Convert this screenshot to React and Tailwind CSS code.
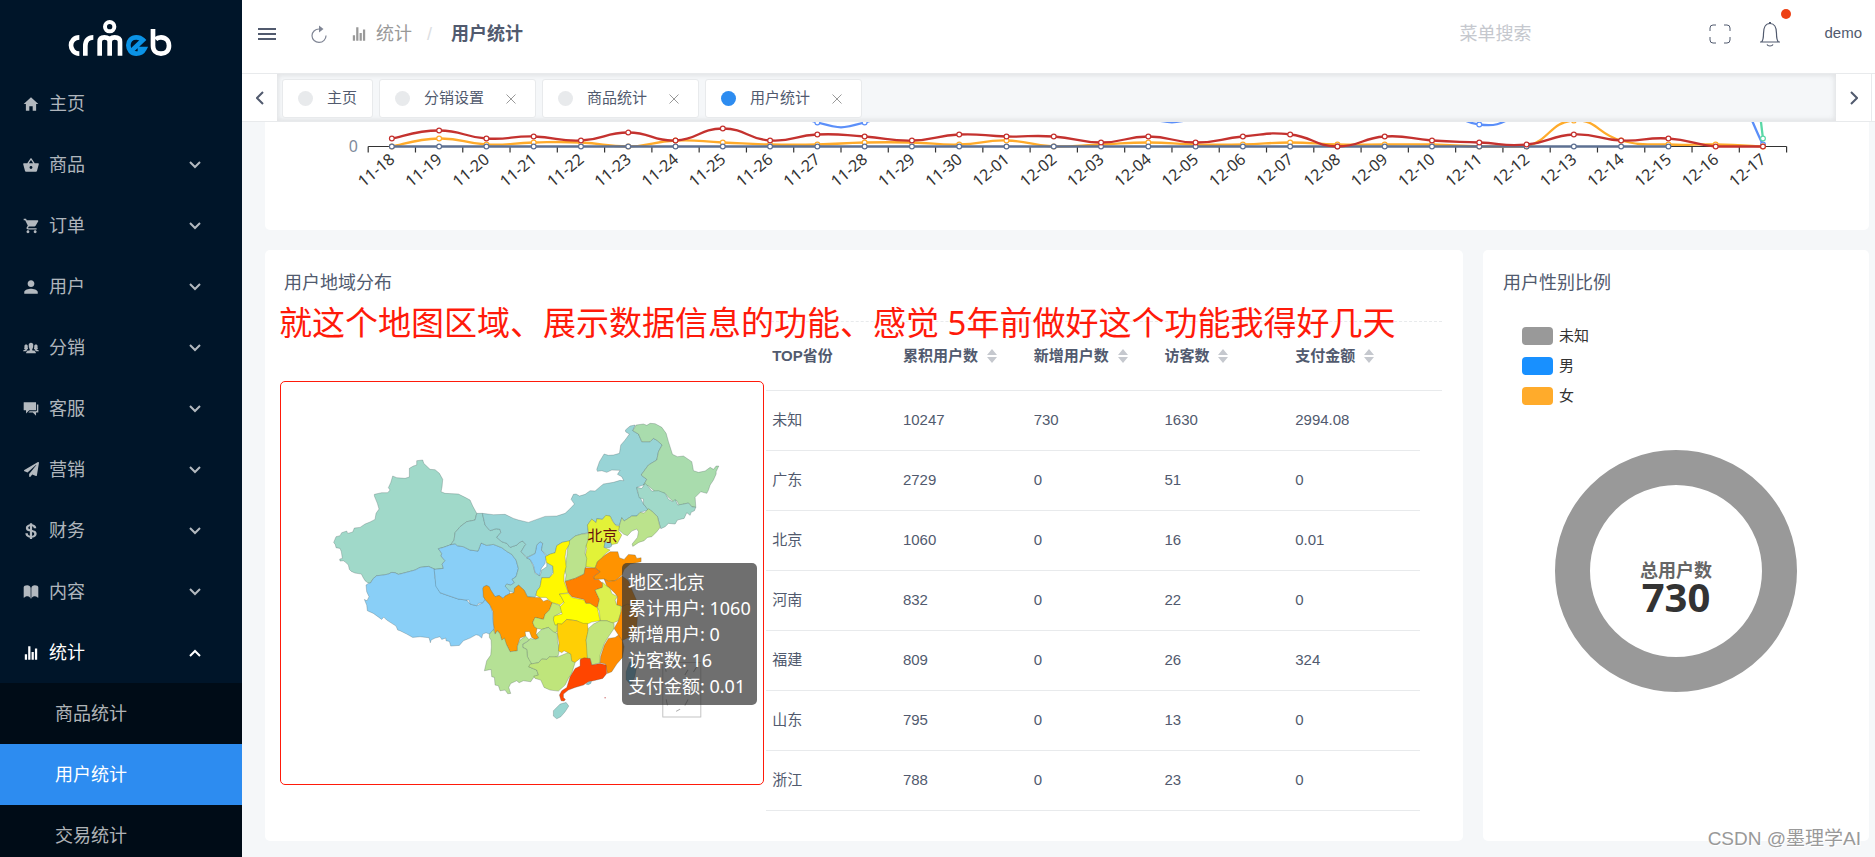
import { memo } from 'react'
import { FaPaperPlane } from 'react-icons/fa'
import {
  IoMdHome,
  IoMdBasket,
  IoMdCart,
  IoMdPerson,
  IoMdMenu,
  IoMdChatboxes,
  IoIosPeople,
  IoIosBook,
  IoIosStats,
  IoLogoUsd,
} from 'react-icons/io'

const MENU = [
  { label: '主页', icon: IoMdHome, leaf: true },
  { label: '商品', icon: IoMdBasket },
  { label: '订单', icon: IoMdCart },
  { label: '用户', icon: IoMdPerson },
  { label: '分销', icon: IoIosPeople },
  { label: '客服', icon: IoMdChatboxes },
  { label: '营销', icon: FaPaperPlane, small: true },
  { label: '财务', icon: IoLogoUsd },
  { label: '内容', icon: IoIosBook },
  { label: '统计', icon: IoIosStats, open: true },
]

const SUB_MENU = ['商品统计', '用户统计', '交易统计']

const TABS = [
  { label: '主页', fixed: true },
  { label: '分销设置' },
  { label: '商品统计' },
  { label: '用户统计', active: true },
]

const COLUMNS = ['TOP省份', '累积用户数', '新增用户数', '访客数', '支付金额']

const ROWS = [
  ['未知', '10247', '730', '1630', '2994.08'],
  ['广东', '2729', '0', '51', '0'],
  ['北京', '1060', '0', '16', '0.01'],
  ['河南', '832', '0', '22', '0'],
  ['福建', '809', '0', '26', '324'],
  ['山东', '795', '0', '13', '0'],
  ['浙江', '788', '0', '23', '0'],
]

const LEGEND = [
  { label: '未知', color: 'bg-[#999999]' },
  { label: '男', color: 'bg-[#1890ff]' },
  { label: '女', color: 'bg-[#ffab2b]' },
]

const DATES = [
  '11-18', '11-19', '11-20', '11-21', '11-22', '11-23', '11-24', '11-25', '11-26', '11-27',
  '11-28', '11-29', '11-30', '12-01', '12-02', '12-03', '12-04', '12-05', '12-06', '12-07',
  '12-08', '12-09', '12-10', '12-11', '12-12', '12-13', '12-14', '12-15', '12-16', '12-17',
]

const SERIES = [
  { color: '#5b8ff9', data: [60, 60, 50, 50, 50, 50, 50, 40, 25, 12, 12, 25, 40, 40, 30, 24, 14, 14, 24, 40, 40, 30, 24, 11, 18, 30, 50, 50, 45, 1] },
  { color: '#5ad8a6', data: [400, 400, 400, 400, 400, 400, 400, 400, 400, 400, 400, 400, 400, 400, 400, 400, 400, 400, 400, 400, 400, 400, 400, 400, 400, 400, 400, 400, 200, 4] },
  { color: '#ffab2b', data: [0, 4, 1, 2, 2, 0, 3, 2, 1, 1, 2, 2, 1, 3, 0, 1, 2, 1, 1, 2, 1, 1, 1, 0, 0, 13, 3, 1, 1, 0] },
  { color: '#5d7092', data: DATES.slice(0, 28).map(() => 0) },
  { color: '#c4322f', data: [4, 8, 4, 5, 3, 7, 3, 9, 3, 6, 5, 3, 6, 5, 5, 2, 5, 2, 5, 6, 0, 5, 3, 2, 1, 6, 3, 4, 0, 0] },
]

const AXIS_Y = 24.5
const AXIS_X = 103.2
const STEP = 47.28
const px = (i) => AXIS_X + STEP * (i + 0.5)
const py = (v) => AXIS_Y - v * 2

// control points never drop below the axis
function smoothPath(data) {
  const pts = data.map((v, i) => [px(i), py(v)])
  let d = `M${pts[0][0]} ${pts[0][1]}`
  for (let i = 0; i < pts.length - 1; i++) {
    const prev = pts[i - 1] || pts[i]
    const a = pts[i]
    const b = pts[i + 1]
    const next = pts[i + 2] || b
    const y1 = Math.min(AXIS_Y, a[1] + (b[1] - prev[1]) / 4)
    const y2 = Math.min(AXIS_Y, b[1] - (next[1] - a[1]) / 4)
    d += `C${a[0] + (b[0] - prev[0]) / 4} ${y1} ${b[0] - (next[0] - a[0]) / 4} ${y2} ${b[0]} ${b[1]}`
  }
  return d
}

const WEST = [
  { name: '新疆', fill: '#a0d9c9', points: '150,520 143,518 135,512 128,500 124,492 105,489 94,484 88,478 85,465 76,456 70,452 60,453 59,447 67,445 64,425 60,415 48,413 46,404 41,397 48,380 60,377 65,368 80,363 83,370 98,366 103,354 120,352 135,342 150,336 165,328 168,310 177,297 172,280 163,258 163,253 185,248 203,248 210,240 205,233 212,218 218,198 230,203 255,205 268,201 268,175 280,168 290,165 290,152 308,150 311,160 330,178 345,179 358,190 368,208 366,230 363,245 375,250 415,252 435,262 450,270 458,288 470,310 465,330 440,335 420,350 405,368 402,390 392,404 370,412 355,416 365,430 363,438 375,452 366,462 370,475 345,478 325,469 300,472 285,480 255,488 235,493 225,488 215,487 205,492 190,495 170,497 160,505' },
  { name: '西藏', fill: '#89cff7', points: '145,520 152,518 160,505 170,497 190,495 205,492 215,487 225,488 235,493 255,488 285,480 300,472 325,469 345,478 344,500 350,525 360,548 380,555 415,567 440,570 450,582 470,587 488,578 495,568 510,585 517,605 520,640 522,668 508,672 498,668 488,672 485,684 476,676 468,674 450,684 430,692 418,706 392,708 388,694 378,692 377,684 365,688 360,680 345,684 333,690 331,698 327,683 300,680 278,682 260,672 240,662 233,660 228,648 200,630 191,621 185,628 160,610 142,602 140,585 133,568 141,572 147,560 140,545 138,525' },
  { name: '青海', fill: '#89cff7', points: '355,416 370,412 392,404 405,401 412,407 430,410 450,420 474,423 483,399 500,406 520,403 545,413 560,424 575,433 588,450 595,475 588,500 576,508 583,518 572,525 560,522 555,528 570,540 568,552 555,558 549,565 537,556 525,560 512,540 500,526 491,530 490,560 495,568 488,578 475,580 470,587 450,582 447,570 440,570 415,567 380,555 360,548 347,528 345,500 342,478 370,475 366,462 375,452 363,438 365,430' },
  { name: '甘肃', fill: '#9ad6d0', points: '470,310 487,310 495,345 510,362 528,356 540,358 542,368 530,382 545,395 560,400 570,412 590,405 600,396 608,393 617,403 612,410 603,425 618,442 630,448 640,470 645,490 660,497 665,480 680,470 680,455 697,465 700,485 688,503 665,503 660,530 650,545 645,562 622,560 612,540 598,527 585,532 582,548 568,543 555,528 560,522 572,525 583,518 576,508 588,500 595,475 588,450 575,433 560,424 545,413 520,403 500,406 483,399 474,423 450,420 430,410 412,407 405,401 392,404 402,390 405,368 420,350 440,335 465,330' },
  { name: '宁夏', fill: '#89cff7', points: '620,444 645,430 650,405 660,395 668,400 664,420 678,437 675,460 664,475 658,497 645,487 640,465 630,448' },
  { name: '四川', fill: '#ff9900', points: '491,530 500,526 508,530 512,540 525,560 537,556 549,565 555,558 570,550 582,548 583,535 595,525 612,540 622,560 645,562 660,562 670,574 682,569 697,577 688,600 675,613 670,628 645,622 638,637 643,650 651,655 648,670 656,684 646,688 635,682 628,664 615,665 617,678 600,684 592,708 592,722 570,725 560,705 545,690 540,672 532,662 525,672 520,640 519,605 510,585 495,568 490,560 488,535' },
  { name: '重庆', fill: '#c6e96f', points: '697,577 720,587 728,605 705,617 700,625 708,645 712,640 711,665 700,670 685,652 665,658 651,655 643,650 638,637 645,622 670,628 675,613 688,600' },
  { name: '贵州', fill: '#b8e296', points: '608,702 620,696 630,685 646,688 656,684 650,672 665,658 685,652 700,665 712,670 712,690 718,720 714,738 695,745 688,740 680,748 665,747 655,758 630,762 622,740 620,718 608,712' },
  { name: '云南', fill: '#b5e195', points: '513,690 508,682 508,672 520,658 525,672 532,662 540,672 545,690 553,684 560,705 570,725 592,722 592,708 600,690 617,678 628,690 608,702 608,712 620,718 622,740 635,762 626,770 650,780 655,795 640,803 632,815 610,812 597,818 590,812 572,820 566,832 572,850 563,851 555,840 540,842 535,827 525,825 523,802 515,800 513,778 493,782 497,765 500,752 512,735 514,710' },
  { name: '广西', fill: '#bfe57b', points: '630,762 655,758 665,747 680,748 688,740 714,740 738,730 750,725 757,740 765,758 755,790 745,805 735,825 715,843 690,840 672,832 662,810 645,805 641,798 655,795 650,780 626,770' },
]

const EAST = [
  { name: '内蒙古', fill: '#98d4d6', points: '-173,310 -140,314 -105,313 -80,325 -65,330 -35,337 -10,328 15,319 50,318 75,310 88,298 103,282 93,268 100,253 108,252 118,258 135,253 150,242 165,243 180,230 190,222 220,217 240,211 251,212 245,200 232,193 240,181 215,180 200,187 185,182 172,184 170,178 178,155 192,132 205,136 220,135 238,130 242,105 255,90 268,72 257,66 256,60 270,48 285,45 278,62 295,72 305,95 330,95 340,85 352,92 366,105 355,125 350,150 325,165 303,195 320,208 310,225 290,232 292,245 300,262 310,282 325,300 300,307 290,318 275,318 252,333 245,323 238,346 225,345 210,318 197,316 187,328 170,326 168,338 155,327 142,345 145,368 125,372 105,378 85,395 66,397 50,407 45,428 20,437 16,432 4,420 8,400 0,395 -10,405 -15,430 -40,442 -57,425 -48,410 -43,403 -52,393 -60,396 -70,405 -90,412 -100,400 -115,395 -130,382 -118,368 -120,358 -132,356 -150,362 -165,345' },
  { name: '黑龙江', fill: '#a9dcad', points: '278,62 288,45 310,42 320,46 330,40 345,41 365,52 378,70 385,95 397,133 412,140 430,138 455,155 460,182 475,187 495,183 510,172 520,178 528,168 536,168 528,185 528,192 520,210 510,225 505,240 500,250 482,245 465,262 467,292 455,290 445,279 430,282 418,287 410,272 400,275 385,262 375,250 345,245 325,228 310,225 320,208 303,195 325,165 350,150 355,125 366,105 352,92 340,85 330,95 305,95 295,72' },
  { name: '吉林', fill: '#a0d9c9', points: '290,232 305,235 315,220 325,230 335,243 355,242 375,250 385,268 398,275 405,268 413,285 430,282 445,279 455,290 467,292 463,302 453,307 450,316 440,308 432,325 412,330 405,342 385,340 375,350 362,356 352,320 335,303 325,300 310,282 310,267 297,263' },
  { name: '辽宁', fill: '#bbe38c', points: '238,346 245,323 252,333 275,318 290,318 300,307 312,309 325,296 335,303 352,320 360,352 350,365 335,380 322,382 312,392 296,397 278,409 276,402 292,382 295,365 290,357 275,363 262,377 250,372 235,358' },
  { name: '河北', fill: '#e2f238', points: '142,345 155,327 168,338 170,326 187,328 197,316 210,318 218,335 228,347 238,348 235,362 245,375 232,400 213,404 195,395 192,412 210,420 195,432 185,445 172,455 165,474 137,470 135,440 140,415 135,395 145,368' },
  { name: '天津', fill: '#8ccdd3', points: '195,395 213,398 215,408 208,413 192,412' },
  { name: '山西', fill: '#bbe38c', points: '85,395 105,378 125,372 145,370 144,390 137,410 135,430 140,445 137,470 132,492 105,505 75,514 78,495 74,480 80,440' },
  { name: '陕西', fill: '#fff800', points: '16,440 30,432 45,428 50,407 66,397 88,392 88,402 78,420 75,440 78,470 72,495 72,514 85,548 58,552 66,565 72,575 60,585 52,582 35,577 18,562 0,562 -12,556 -10,543 0,530 5,503 28,503 40,490 38,468 20,458' },
  { name: '山东', fill: '#ff9300', points: '165,474 172,455 195,435 210,425 233,425 238,443 252,448 265,433 285,435 290,445 303,443 303,455 270,462 252,478 246,495 225,512 205,514 192,507 163,508 160,500 180,485' },
  { name: '河南', fill: '#ff8000', points: '75,514 105,505 132,492 135,473 165,474 180,485 160,500 163,508 175,508 190,522 187,532 165,540 178,568 172,592 160,590 150,580 137,580 132,568 95,560 85,548' },
  { name: '江苏', fill: '#ff8c00', points: '192,507 205,514 225,512 246,498 265,512 278,545 290,572 270,585 245,590 230,585 232,560 225,550 210,535 200,528' },
  { name: '安徽', fill: '#dcf04e', points: '187,516 200,528 210,535 215,550 232,560 225,570 230,585 243,588 243,605 235,632 215,640 200,632 180,632 178,605 172,592 178,568 165,540 187,532' },
  { name: '湖北', fill: '#ffff00', points: '58,552 85,550 95,562 132,570 137,580 150,580 172,594 180,632 155,636 130,648 110,632 80,628 65,642 45,645 40,630 42,618 66,612 60,590 72,578 66,565' },
  { name: '湖南', fill: '#ffcf05', points: '52,640 65,642 80,628 110,632 130,640 142,640 145,665 138,690 145,720 142,752 120,745 105,757 95,753 92,732 72,722 65,728 55,722 57,700 52,670' },
  { name: '江西', fill: '#c3e67b', points: '145,655 160,642 180,632 200,632 222,640 222,655 205,680 193,700 180,735 180,758 155,765 150,745 142,748 138,690' },
  { name: '浙江', fill: '#ff8c00', points: '245,590 262,582 285,590 292,620 290,650 270,680 245,692 235,675 222,655 235,632 243,605' },
  { name: '福建', fill: '#ff8c00', points: '205,685 225,682 235,675 247,692 252,710 247,742 230,762 215,785 202,790 196,762 180,758 182,738 193,705' },
  { name: '广东', fill: '#ff4500', points: '120,748 132,743 150,745 155,765 180,760 198,765 200,790 188,805 160,812 145,815 130,825 105,832 85,840 70,852 70,862 76,868 72,873 63,872 58,855 65,842 80,832 90,800 105,775 120,768' },
  { name: '海南', fill: '#9ad6d0', points: '40,902 60,882 78,877 86,888 75,905 62,920 50,926 40,918' },
  { name: '台湾', fill: '#6fb4d8', points: '268,757 282,750 290,768 284,800 272,825 258,808 258,785' },
]

const CJK = "font-[family-name:'Noto_Sans','Noto_Sans_CJK_SC',sans-serif]"

function Logo() {
  return (
    <svg width="107" height="40" viewBox="200 50 321 120" fill="none" stroke="#fff" strokeWidth="14">
      <path d="M237 111c-16 0-25 12-25 24s9 25 25 25" />
      <path d="M255 166v-29c0-17 9-26 24-26" />
      <path d="M298 166v-42c0-9 5-13 14-13s16 4 16 13v42m0-42c0-9 6-13 15-13s16 4 16 13v42" />
      <circle cx="328" cy="79" r="14" strokeWidth="12" />
      <path d="M394 151l34-32c-5-5-12-8-20-8-15 0-24 11-24 24s9 25 24 25c11 0 20-6 24-14h-20" stroke="#0b93e6" strokeWidth="14" />
      <path d="M458 86v50c0 15 10 24 24 24s24-9 24-24-10-25-24-25c-6 0-12 2-16 6" />
    </svg>
  )
}

function Chevron({ up }) {
  return (
    <svg width="12" height="8" viewBox="0 0 12 8" fill="none" stroke="currentColor" strokeWidth="2">
      <path d={up ? 'M1 7l5-5 5 5' : 'M1 1l5 5 5-5'} />
    </svg>
  )
}

function Sidebar() {
  return (
    <aside className="w-[242px] shrink-0 overflow-hidden bg-[#001529] text-lg text-white/70">
      <a href="#home" aria-label="crmeb" className="flex h-[73px] items-start pt-[17px] pl-[67px]">
        <Logo />
      </a>
      <nav>
        {MENU.map(({ label, icon: Icon, leaf, open, small }) => (
          <a
            key={label}
            href={`#${label}`}
            className={`flex h-[61px] items-center pr-[41px] pl-[22px] ${open ? 'text-white' : ''}`}>
            <span className="flex w-[18px] justify-center">
              <Icon size={small ? 15 : 18} />
            </span>
            <span className="ml-[9px] flex-1">{label}</span>
            {!leaf && <Chevron up={open} />}
          </a>
        ))}
        <div className="bg-[#000c17]">
          {SUB_MENU.map((label) => (
            <a
              key={label}
              href={`#${label}`}
              className={`flex h-[61px] items-center pl-[55px] ${label === '用户统计' ? 'bg-[#2d8cf0] text-white' : ''}`}>
              {label}
            </a>
          ))}
        </div>
      </nav>
    </aside>
  )
}

function Header() {
  return (
    <header className="flex h-[74px] shrink-0 items-center border-b border-[#e8eaec] bg-white pb-[6px] text-[#515a6e]">
      <button type="button" aria-label="菜单" className="ml-[13px]">
        <IoMdMenu size={24} />
      </button>
      <button type="button" aria-label="刷新" className="ml-[32px] text-[#808695]">
        <svg width="16" height="18" viewBox="0 0 16 18" fill="none" stroke="currentColor" strokeWidth="1.2">
          <path d="M11 4H8a7 6.7 0 107 6.500" />
          <path d="M8 .5L12.500 4 8 7.500z" fill="currentColor" stroke="none" />
        </svg>
      </button>
      <div className="ml-[23px] flex items-center text-lg">
        <IoIosStats size={18} className="text-[#999999]" />
        <a href="#stats" className="ml-[8px] text-[#999999]">统计</a>
        <span className="mx-[15px] text-[#dcdee2]">/</span>
        <span className="ml-[4px] font-bold">用户统计</span>
      </div>
      <div className="flex-1" />
      <input
        type="text"
        aria-label="菜单搜索"
        placeholder="菜单搜索"
        className="w-[200px] text-lg outline-none placeholder:text-[#c5c8ce]"
      />
      <button type="button" aria-label="全屏" className="ml-[50px]">
        <svg width="22" height="20" viewBox="0 0 22 20" fill="none" stroke="currentColor">
          <path d="M1 7V4a3 3 0 013-3h3M15 1h3a3 3 0 013 3v3M21 13v3a3 3 0 01-3 3h-3M7 19H4a3 3 0 01-3-3v-3" />
        </svg>
      </button>
      <button type="button" aria-label="消息" className="relative ml-[28px]">
        <svg width="22" height="26" viewBox="0 0 22 26" fill="none" stroke="currentColor" strokeWidth="1.2">
          <path d="M1 21h20M2.500 21c2-2 2-4 2-8.500 0-6 2-10 6.500-10s6.500 4 6.500 10c0 4.500 0 6.500 2 8.500M8 23.500c1 2 5 2 6 0" />
          <path d="M11 3V1" strokeWidth="2" />
        </svg>
        <span className="absolute -top-[12px] -right-[10px] size-[10px] rounded-full bg-[#ed4014]" />
      </button>
      <a href="#demo" className="mr-[13px] ml-[43px] text-[15px]">demo</a>
    </header>
  )
}

function Tabs() {
  return (
    <div className="flex h-[48px] shrink-0 border-b border-[#e8eaec] bg-white text-[#515a6e]">
      <button type="button" aria-label="向左" className="flex w-[35px] items-center justify-center">
        <svg width="8" height="14" viewBox="0 0 8 14" fill="none" stroke="currentColor" strokeWidth="2">
          <path d="M7 1L1 7l6 6" />
        </svg>
      </button>
      <div className="flex flex-1 items-center gap-[6px] bg-[#f5f7f9] px-[5px] pt-[2px] shadow-[inset_0_0_4px_2px_rgba(100,100,100,0.12)]">
        {TABS.map(({ label, fixed, active }) => (
          <div
            key={label}
            className="flex h-[39px] items-center rounded-[3px] border border-[#e8eaec] bg-white px-[15px] text-[15px]">
            <span className={`size-[15px] rounded-full ${active ? 'bg-[#2d8cf0]' : 'bg-[#e8eaec]'}`} />
            <a href={`#${label}`} className="ml-[14px]">{label}</a>
            {!fixed && (
              <button type="button" aria-label={`关闭${label}`} className="mr-[4px] ml-[22px] text-[#999999]">
                <svg width="10" height="10" viewBox="0 0 10 10" stroke="currentColor">
                  <path d="M.5.5l9 9M9.500.5l-9 9" />
                </svg>
              </button>
            )}
          </div>
        ))}
      </div>
      <button type="button" aria-label="向右" className="mr-[3px] flex w-[36px] items-center justify-center border-r border-[#e8eaec]">
        <svg width="8" height="14" viewBox="0 0 8 14" fill="none" stroke="currentColor" strokeWidth="2">
          <path d="M1 1l6 6-6 6" />
        </svg>
      </button>
    </div>
  )
}

const TrendChart = memo(function TrendChart() {
  return (
    <section className="overflow-hidden rounded-b-[5px] bg-white">
      <svg viewBox="0 0 1604 108" className={`block w-full ${CJK}`}>
        <g stroke="#333" strokeWidth="1.2">
          <path d={`M${AXIS_X} ${AXIS_Y}H${AXIS_X + STEP * 30}`} />
          {[...DATES, 'end'].map((d, i) => (
            <path key={d} d={`M${AXIS_X + STEP * i} ${AXIS_Y}v6`} />
          ))}
        </g>
        <text x="93" y="30" textAnchor="end" fontSize="16" fill="#7f8b9c">0</text>
        {DATES.map((d, i) => (
          <text
            key={d}
            transform={`translate(${px(i) + 4} 39) rotate(-40)`}
            textAnchor="end"
            fontSize="16"
            fill="#333">
            {d}
          </text>
        ))}
        {SERIES.map(({ color, data }) => (
          <g key={color} fill="none" stroke={color}>
            <path d={smoothPath(data)} strokeWidth="2.3" />
            {data.map((v, i) => (
              <circle key={i} cx={px(i)} cy={py(v)} r="2.4" fill="#fff" strokeWidth="1.2" />
            ))}
          </g>
        ))}
      </svg>
    </section>
  )
})

const ChinaMap = memo(function ChinaMap() {
  return (
    <svg viewBox="-117 -84 1446 1206" className="block w-full" stroke="rgba(60,80,80,0.4)" strokeWidth="2" strokeLinejoin="round">
      {WEST.map((p) => (
        <polygon key={p.name} points={p.points} fill={p.fill} />
      ))}
      <g transform="translate(660 0)">
        {EAST.map((p) => (
          <polygon key={p.name} points={p.points} fill={p.fill} />
        ))}
        <path d="M138 822l8-6 8-2-2 6-8 4z" fill="#8ccdd3" />
        <circle cx="195" cy="863" r="2" fill="#c66" stroke="none" />
        <rect x="368" y="757" width="114" height="164" fill="none" stroke="#c4c4c4" strokeWidth="3" />
        <path d="M378 785l-4-22M434 795l10-16M378 868l4 18M434 886l10-18M408 904l12-7M398 762l12-4M470 770l-10 16" fill="none" stroke="#aaa" strokeWidth="3" />
        <text x="187" y="392" textAnchor="middle" fontSize="45" fill="#64100f" stroke="none">北京</text>
      </g>
    </svg>
  )
})

function MapTooltip() {
  return (
    <div className={`absolute top-[181px] left-[341px] rounded-[5px] bg-[#323232]/70 p-[6px] text-lg leading-[26px] whitespace-nowrap text-white ${CJK}`}>
      <div>地区:北京</div>
      <div>累计用户: 1060</div>
      <div>新增用户: 0</div>
      <div>访客数: 16</div>
      <div>支付金额: 0.01</div>
    </div>
  )
}

function SortButton({ label }) {
  return (
    <button type="button" aria-label={`${label}排序`} className="ml-[9px]">
      <svg width="10" height="14" viewBox="0 0 10 14" fill="#c5c8ce">
        <path d="M5 0l5 6H0zM5 14l5-6H0z" />
      </svg>
    </button>
  )
}

function RegionTable() {
  return (
    <table className="w-full table-fixed border-separate border-spacing-0 border-t border-dashed border-[#e8eaec] text-left text-[15px]">
      <thead>
        <tr className="h-[69px]">
          {COLUMNS.map((label, i) => (
            <th key={label} className="border-b border-solid border-[#e8eaec] p-0 pl-[6px] font-bold">
              <div className="flex items-center">
                {label}
                {i > 0 && <SortButton label={label} />}
              </div>
            </th>
          ))}
          <th className="w-[22px] border-b border-solid border-[#e8eaec] p-0" />
        </tr>
      </thead>
      <tbody>
        {ROWS.map((row) => (
          <tr key={row[0]} className="h-[60px]">
            {row.map((cell, i) => (
              <td key={i} className="border-b border-solid border-[#e8eaec] p-0 pl-[6px]">{cell}</td>
            ))}
            <td />
          </tr>
        ))}
      </tbody>
    </table>
  )
}

function RegionCard() {
  return (
    <section className="relative col-span-3 rounded-[5px] bg-white pr-[21px] pb-[30px] pl-[15px]">
      <h2 className="mb-[5px] flex h-[66px] items-center pl-[4px] text-lg">用户地域分布</h2>
      <div className="flex items-start">
        <div className="relative mt-[60px] w-5/12 rounded-[5px] border border-[#ff1a0a]">
          <ChinaMap />
          <MapTooltip />
        </div>
        <div className="ml-[2px] flex-1">
          <RegionTable />
        </div>
      </div>
      <p className={`absolute top-[49px] left-[14px] text-[33px] leading-[48px] whitespace-nowrap text-[#ff1a0a] ${CJK}`}>
        就这个地图区域、展示数据信息的功能、感觉 5年前做好这个功能我得好几天
      </p>
    </section>
  )
}

function GenderCard() {
  return (
    <section className="rounded-[5px] bg-white">
      <h2 className="mb-[5px] flex h-[66px] items-center pl-[20px] text-lg">用户性别比例</h2>
      <ul className="pl-[39px] text-[15px] text-[#333333]">
        {LEGEND.map(({ label, color }) => (
          <li key={label} className="flex h-[30px] items-center gap-[6px]">
            <span className={`h-[18px] w-[31px] rounded-[4px] ${color}`} />
            {label}
          </li>
        ))}
      </ul>
      <svg width="242" height="242" viewBox="0 0 242 242" className={`mx-auto mt-[39px] ${CJK}`} textAnchor="middle" fontWeight="bold">
        <circle cx="121" cy="121" r="103.5" fill="none" stroke="#999999" strokeWidth="35" />
        <text x="121" y="127" fontSize="18" fill="#666666">总用户数</text>
        <text x="121" y="162" fontSize="40" fill="#333333">730</text>
      </svg>
    </section>
  )
}

export default function App() {
  return (
    <div className="relative flex h-screen overflow-hidden bg-[#f5f7f9] font-[family-name:'Liberation_Sans','Noto_Sans_CJK_SC',sans-serif] text-[#515a6e]">
      <Sidebar />
      <div className="flex min-w-0 flex-1 flex-col">
        <Header />
        <Tabs />
        <main className="flex-1 overflow-hidden pr-[6px] pl-[23px]">
          <TrendChart />
          <div className="mt-5 grid grid-cols-4 gap-5">
            <RegionCard />
            <GenderCard />
          </div>
        </main>
      </div>
      <div className="absolute right-[14px] bottom-[4px] text-[19px] text-[#999999] [text-shadow:1px_1px_0_#ffffff]">
        CSDN @墨理学AI
      </div>
    </div>
  )
}
